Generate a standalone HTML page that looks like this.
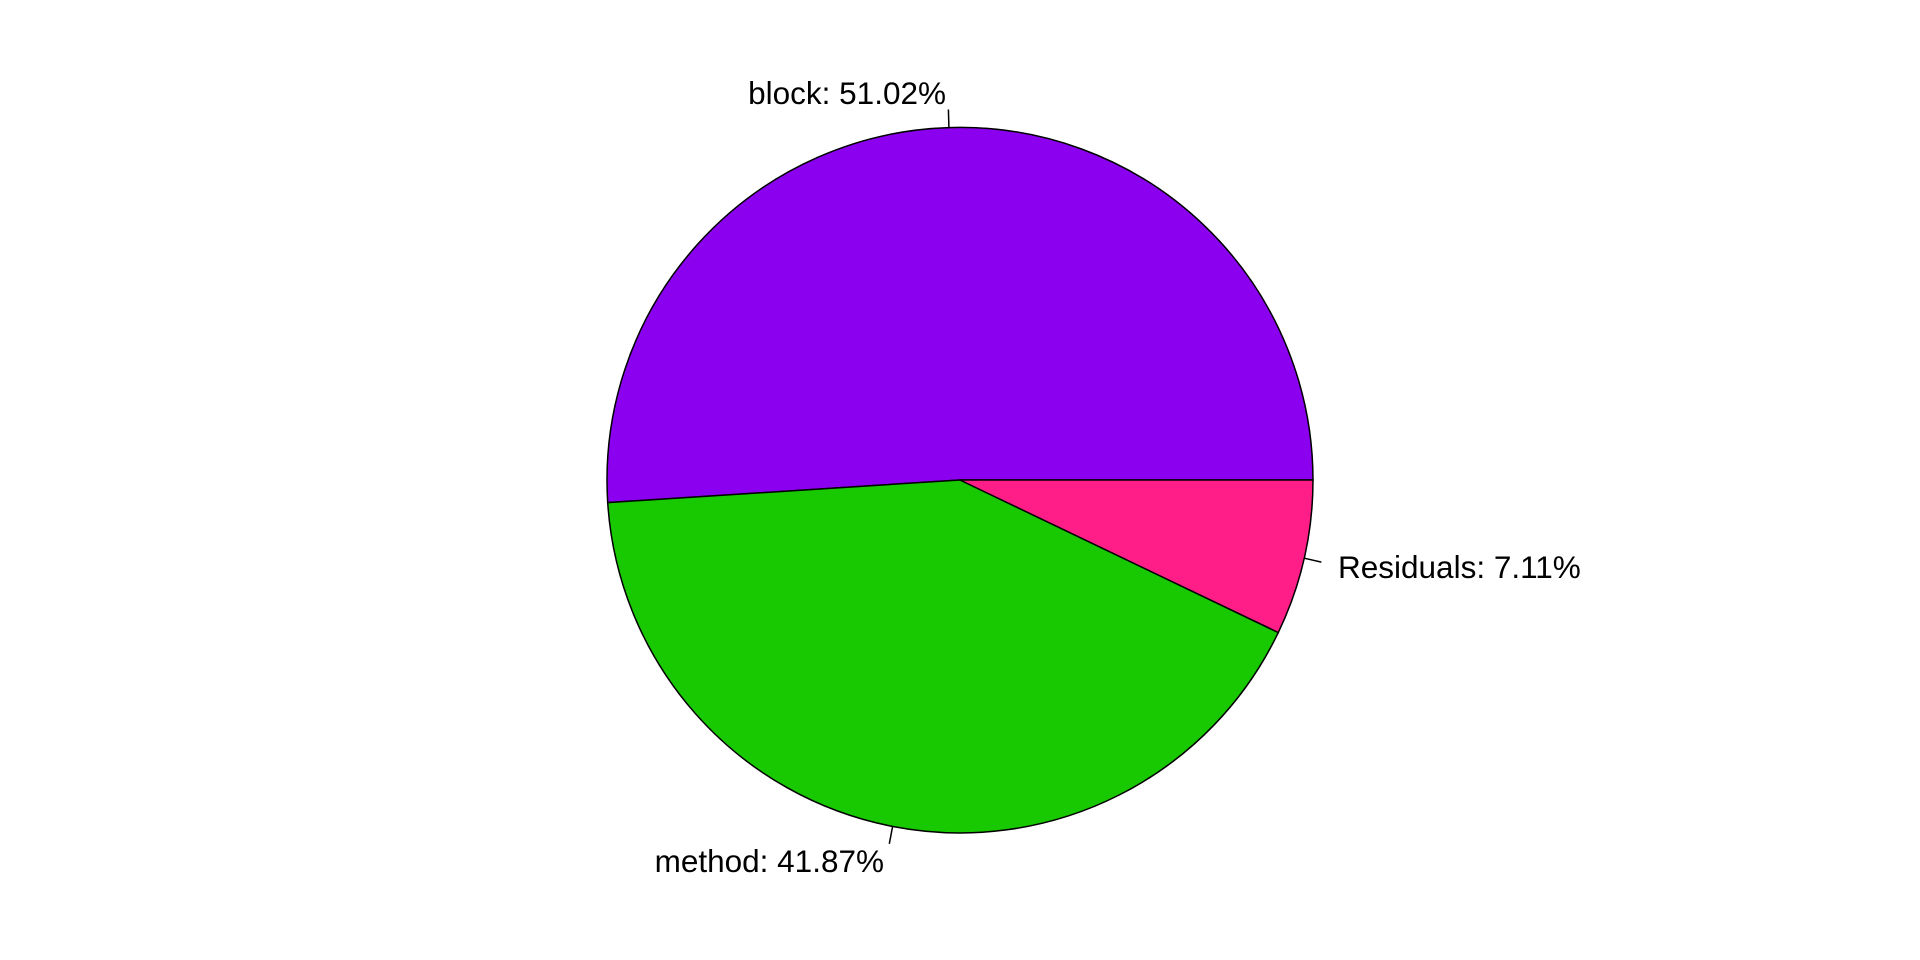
<!DOCTYPE html>
<html><head><meta charset="utf-8"><style>
html,body{margin:0;padding:0;background:#fff;width:1920px;height:960px;overflow:hidden}
svg{display:block}
text{font-family:"Liberation Sans",Arial,sans-serif;font-size:31.5px;fill:#000}
</style></head><body>
<svg width="1920" height="960" viewBox="0 0 1920 960">
<path d="M960,480 L1313,480 A353,353 0 1 0 607.7,502.6 Z" fill="#8B00EE" stroke="#000" stroke-width="1.5"/>
<path d="M960,480 L607.7,502.6 A353,353 0 0 0 1278.3,632.5 Z" fill="#18C800" stroke="#000" stroke-width="1.5"/>
<path d="M960,480 L1278.3,632.5 A353,353 0 0 0 1313,480 Z" fill="#FF1E87" stroke="#000" stroke-width="1.5"/>
<line x1="948.9" y1="127.2" x2="948.4" y2="109.5" stroke="#000" stroke-width="1.5"/>
<line x1="892.6" y1="826.5" x2="889.3" y2="843.8" stroke="#000" stroke-width="1.5"/>
<line x1="1304.2" y1="558.2" x2="1321.4" y2="562.1" stroke="#000" stroke-width="1.5"/>
<text x="946" y="104" text-anchor="end">block: 51.02%</text>
<text x="884" y="872" text-anchor="end">method: 41.87%</text>
<text x="1338" y="578">Residuals: 7.11%</text>
</svg>
</body></html>
